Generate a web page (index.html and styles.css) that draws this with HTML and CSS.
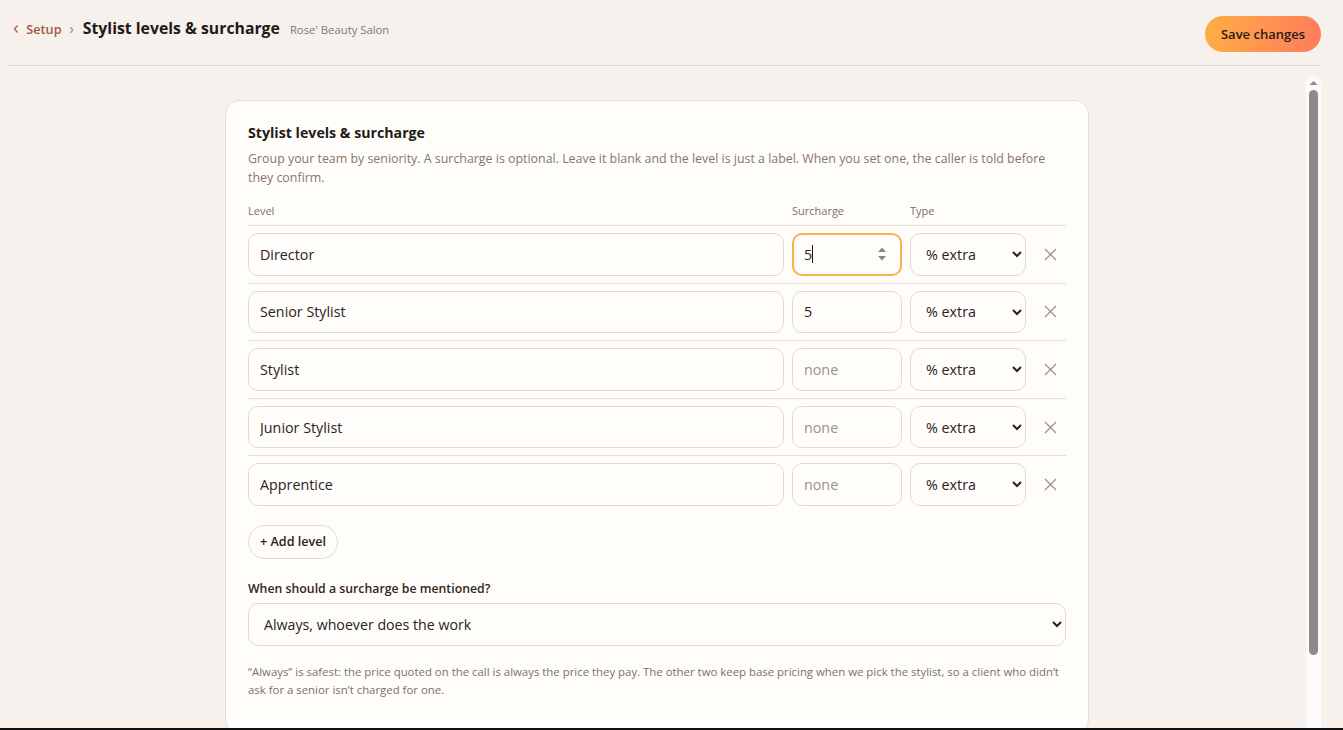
FILE: index.html
```html
<!DOCTYPE html>
<html lang="en">
<head>
    <meta charset="UTF-8">
    <meta name="viewport" content="width=device-width, initial-scale=1.0">
    <title>Stylist levels &amp; surcharge</title>
    <link rel="stylesheet" href="styles.css">
</head>
<body>
    <div class="app">
        <header class="topbar">
            <nav class="crumbs">
                <a href="#" class="back">
                    <svg width="8" height="10" viewBox="0 0 8 10"><path d="M5.5 1.5 L2.5 5 L5.5 8.5" fill="none" stroke="#b0603e" stroke-width="1.3"/></svg>
                    Setup
                </a>
                <span class="sep">&rsaquo;</span>
                <h1>Stylist levels &amp; surcharge</h1>
                <span class="salon">Rose' Beauty Salon</span>
            </nav>
            <button class="save">Save changes</button>
        </header>

        <div class="viewport">
            <main class="scroll">
                <section class="card">
                    <h2>Stylist levels &amp; surcharge</h2>
                    <p class="desc">Group your team by seniority. A surcharge is optional. Leave it blank and the level is just a label. When you set one, the caller is told before they confirm.</p>

                    <div class="grid cols">
                        <span>Level</span>
                        <span>Surcharge</span>
                        <span>Type</span>
                        <span></span>
                    </div>

                    <div class="grid row">
                        <input class="field" type="text" value="Director">
                        <div class="num focused">
                            <input class="field" type="text" value="5">
                            <span class="caret"></span>
                            <svg class="spin" width="10" height="18" viewBox="0 0 10 18"><path d="M1 7 L5 2.5 L9 7 Z M1 11 L5 15.5 L9 11 Z" fill="#8a8581"/></svg>
                        </div>
                        <select class="field"><option>% extra</option><option>$ extra</option></select>
                        <button class="remove"><svg width="13" height="13" viewBox="0 0 13 13"><path d="M1 1 L12 12 M12 1 L1 12" stroke="#9d918b" stroke-width="1.3"/></svg></button>
                    </div>
                    <div class="grid row">
                        <input class="field" type="text" value="Senior Stylist">
                        <input class="field" type="text" value="5">
                        <select class="field"><option>% extra</option><option>$ extra</option></select>
                        <button class="remove"><svg width="13" height="13" viewBox="0 0 13 13"><path d="M1 1 L12 12 M12 1 L1 12" stroke="#9d918b" stroke-width="1.3"/></svg></button>
                    </div>
                    <div class="grid row">
                        <input class="field" type="text" value="Stylist">
                        <input class="field" type="text" placeholder="none">
                        <select class="field"><option>% extra</option><option>$ extra</option></select>
                        <button class="remove"><svg width="13" height="13" viewBox="0 0 13 13"><path d="M1 1 L12 12 M12 1 L1 12" stroke="#9d918b" stroke-width="1.3"/></svg></button>
                    </div>
                    <div class="grid row">
                        <input class="field" type="text" value="Junior Stylist">
                        <input class="field" type="text" placeholder="none">
                        <select class="field"><option>% extra</option><option>$ extra</option></select>
                        <button class="remove"><svg width="13" height="13" viewBox="0 0 13 13"><path d="M1 1 L12 12 M12 1 L1 12" stroke="#9d918b" stroke-width="1.3"/></svg></button>
                    </div>
                    <div class="grid row">
                        <input class="field" type="text" value="Apprentice">
                        <input class="field" type="text" placeholder="none">
                        <select class="field"><option>% extra</option><option>$ extra</option></select>
                        <button class="remove"><svg width="13" height="13" viewBox="0 0 13 13"><path d="M1 1 L12 12 M12 1 L1 12" stroke="#9d918b" stroke-width="1.3"/></svg></button>
                    </div>

                    <button class="add">+ Add level</button>

                    <label class="question">When should a surcharge be mentioned?</label>
                    <select class="field wide">
                        <option>Always, whoever does the work</option>
                        <option>Only when the client asks for a senior</option>
                        <option>Never</option>
                    </select>
                    <p class="note">&ldquo;Always&rdquo; is safest: the price quoted on the call is always the price they pay. The other two keep base pricing when we pick the stylist, so a client who didn&rsquo;t ask for a senior isn&rsquo;t charged for one.</p>
                </section>
            </main>

            <div class="scrollbar">
                <svg class="arrow" width="15" height="14" viewBox="0 0 15 14"><path d="M3.5 9 L7.5 5 L11.5 9 Z" fill="#8b8b8b"/></svg>
                <div class="thumb"></div>
            </div>
        </div>
    </div>
    <div class="edge"></div>
</body>
</html>
```

FILE: styles.css
```css
html, body {
    height: 100%;
}

body {
    margin: 0;
    font-family: "Open Sans", "Noto Sans", sans-serif;
    background: #f6f1ed;
    color: #2b211e;
    display: flex;
    flex-direction: column;
    overflow: hidden;
}

.app {
    flex: 1;
    min-height: 0;
    display: flex;
    flex-direction: column;
    padding: 0 22px 0 8px;
}

.topbar {
    display: flex;
    justify-content: space-between;
    align-items: flex-start;
    padding: 15px 0 13px 4px;
    border-bottom: 1px solid #ddd4ce;
}

.crumbs {
    display: flex;
    align-items: baseline;
    line-height: 26px;
}

.back {
    color: #a4583a;
    text-decoration: none;
    font-size: 12.7px;
    font-weight: 600;
}

.back svg {
    margin-right: 3px;
}

.sep {
    color: #8a7f79;
    font-size: 14px;
    margin: 0 9px 0 8px;
}

h1 {
    margin: 0;
    font-size: 15.8px;
    font-weight: 700;
    color: #231a17;
}

.salon {
    margin-left: 10px;
    font-size: 11.3px;
    color: #837771;
}

.save {
    height: 36px;
    margin-top: 1px;
    padding: 0 16px;
    border: none;
    border-radius: 18px;
    background: linear-gradient(100deg, #ffae45, #ff7b5c);
    color: #2a1c16;
    font-family: inherit;
    font-size: 13px;
    font-weight: 600;
    cursor: pointer;
}

.viewport {
    flex: 1;
    min-height: 0;
    display: flex;
    margin-top: 10px;
}

.scroll {
    flex: 1;
    min-width: 0;
    overflow: hidden;
    padding-top: 24px;
}

.scrollbar {
    width: 15px;
    display: flex;
    flex-direction: column;
    align-items: center;
    background: #fbfbfb;
    border-radius: 8px 8px 0 0;
}

.arrow {
    flex: none;
}

.thumb {
    width: 9px;
    height: 565px;
    background: #8b8b8b;
    border-radius: 5px;
}

.card {
    width: 818px;
    margin: 0 auto;
    padding: 22px 22px 34px;
    background: #fffdfa;
    border: 1px solid #e6ddd6;
    border-radius: 14px;
}

h2 {
    margin: 0;
    font-size: 14.2px;
    font-weight: 700;
    line-height: 20px;
    color: #231a17;
}

.desc {
    margin: 6px 0 0;
    font-size: 12.4px;
    line-height: 19px;
    color: #85766d;
}

.grid {
    display: grid;
    grid-template-columns: 1fr 110px 116px 32px;
    column-gap: 8px;
    align-items: center;
}

.cols {
    margin-top: 16px;
    padding-bottom: 6px;
    border-bottom: 1px solid #e6ddd6;
    font-size: 11px;
    line-height: 16px;
    color: #7b6f69;
}

.row {
    padding: 7px 0;
    border-bottom: 1px solid #e6ddd6;
}

.row:last-of-type {
    border-bottom: none;
}

.field {
    box-sizing: border-box;
    width: 100%;
    height: 42.6px;
    padding: 0 11px;
    border: 1px solid #e3d9d2;
    border-radius: 10px;
    background: #fffdfa;
    font-family: inherit;
    font-size: 14.3px;
    color: #2b211e;
    outline: none;
}

.field::placeholder {
    color: #9b908a;
}

select.field {
    padding: 0 6px 0 11px;
}

.num {
    position: relative;
}

.num.focused .field {
    border: 2px solid #f6b24c;
    padding-left: 10px;
}

.caret {
    position: absolute;
    left: 20px;
    top: 12px;
    width: 1px;
    height: 18px;
    background: #1d1613;
}

.spin {
    position: absolute;
    right: 15px;
    top: 12px;
}

.remove {
    justify-self: center;
    display: flex;
    padding: 4px;
    border: none;
    background: none;
    cursor: pointer;
}

.add {
    margin-top: 12px;
    height: 34px;
    padding: 0 11px;
    border: 1px solid #e3d9d2;
    border-radius: 17px;
    background: #fffdfa;
    font-family: inherit;
    font-size: 12.6px;
    font-weight: 600;
    color: #2b211e;
    cursor: pointer;
}

.question {
    display: block;
    margin-top: 21px;
    font-size: 12.3px;
    font-weight: 600;
    line-height: 18px;
    color: #2f2522;
}

.wide {
    margin-top: 5px;
    padding-left: 15px;
    font-size: 14.2px;
}

.note {
    margin: 17px 0 0;
    font-size: 11.4px;
    line-height: 18px;
    color: #7d6f68;
}

.edge {
    height: 2px;
    background: #111;
}
```
